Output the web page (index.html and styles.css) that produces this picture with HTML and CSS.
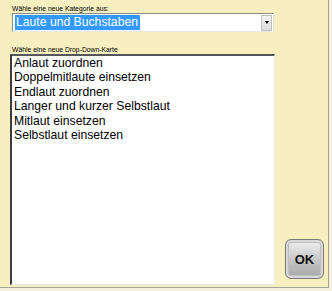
FILE: index.html
```html
<!DOCTYPE html>
<html>
	<head>
		<meta charset="utf-8">
		<title>Kategorie</title>
		<link rel="stylesheet" href="styles.css">
	</head>
	<body>
		<div class="dialog">
			<div class="main">
				<div class="label">Wähle eine neue Kategorie aus:</div>
				<div class="combo">
					<span class="combo_text">Laute und Buchstaben</span>
					<span class="combo_btn"><span class="arrow"></span></span>
				</div>
				<div class="label label2">Wähle eine neue Drop-Down-Karte</div>
				<ul class="list">
					<li>Anlaut zuordnen</li>
					<li>Doppelmitlaute einsetzen</li>
					<li>Endlaut zuordnen</li>
					<li>Langer und kurzer Selbstlaut</li>
					<li>Mitlaut einsetzen</li>
					<li>Selbstlaut einsetzen</li>
				</ul>
			</div>
			<div class="side">
				<div class="ok">OK</div>
			</div>
		</div>
	</body>
</html>
```

FILE: styles.css
```css
*{
	margin: 0;
	padding: 0;
}
body{
	background: #f4f0dc;
	font-family: "Liberation Sans", Arial, sans-serif;
}
.dialog{
	width: 329px;
	height: 288px;
	background: #f7efbf;
	border-right: 1px solid #a8a598;
	border-bottom: 1px solid #a8a598;
	display: flex;
	box-sizing: border-box;
	padding: 4px 0 2px 10px;
}
.main{
	width: 265px;
	display: flex;
	flex-direction: column;
}
.label{
	font-size: 6.8px;
	line-height: 9px;
	color: #000;
	padding-left: 2px;
}
.combo{
	margin-left: 2px;
	width: 262px;
	height: 19px;
	box-sizing: border-box;
	background: #fff;
	border: 1px solid;
	border-color: #8a8a8a #e0e0e0 #e8e8e8 #8a8a8a;
	display: flex;
	align-items: center;
	justify-content: space-between;
	padding: 0 1px 0 2px;
}
.combo_text{
	background: #3399ff;
	color: #fff;
	font-size: 12.2px;
	line-height: 15px;
	padding: 0 2px 0 1px;
}
.combo_btn{
	width: 11px;
	height: 16px;
	box-sizing: border-box;
	background: linear-gradient(#f4f4f4, #dcdcdc);
	border: 1px solid #c0c0c0;
	display: flex;
	align-items: center;
	justify-content: center;
}
.arrow{
	width: 0;
	height: 0;
	border-left: 2.5px solid transparent;
	border-right: 2.5px solid transparent;
	border-top: 3px solid #000;
}
.label2{
	margin-top: 13px;
}
.list{
	list-style: none;
	flex: 1;
	background: #fff;
	border-style: solid;
	border-width: 2px 1px 1px 2px;
	border-color: #55555a #eeeeee #e6e6e6 #3c3c40;
	padding: 0 0 0 2px;
	font-size: 12.2px;
	line-height: 14.4px;
	color: #000;
}
.side{
	flex: 1;
	display: flex;
	align-items: flex-end;
	justify-content: center;
	padding-bottom: 6px;
	padding-left: 6px;
}
.ok{
	width: 39px;
	height: 40px;
	box-sizing: border-box;
	border: 1px solid #7a7a7a;
	border-radius: 6px;
	background: linear-gradient(#f2f2f2, #c4c4c4 55%, #a8a8a8);
	box-shadow: inset 0 0 0 2px #d8d8d8, inset 0 0 0 3px #bdbdbd;
	display: flex;
	align-items: center;
	justify-content: center;
	font-size: 13px;
	font-weight: bold;
	color: #111;
}
```
